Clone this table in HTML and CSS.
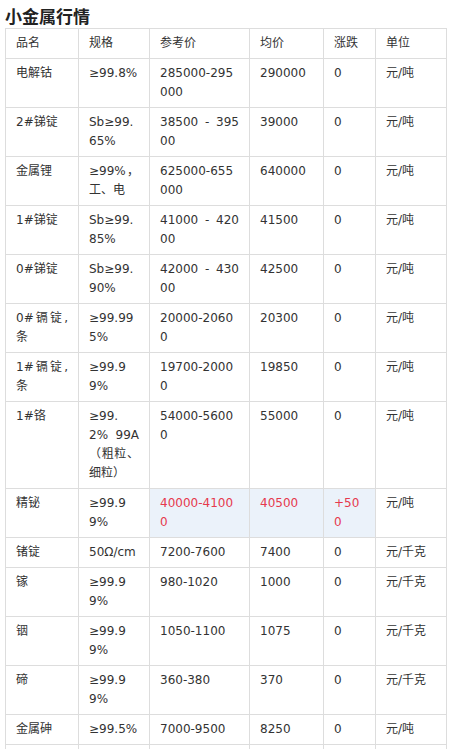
FILE: index.html
```html
<!DOCTYPE html>
<html lang="zh-CN">
<head>
<meta charset="utf-8">
<title>小金属行情</title>
<link rel="stylesheet" href="styles.css">
</head>
<body>
<div class="page">
  <h2 class="title">小金属行情</h2>
  <table class="quotes">
    <colgroup>
      <col class="c-name">
      <col class="c-spec">
      <col class="c-ref">
      <col class="c-avg">
      <col class="c-chg">
      <col class="c-unit">
    </colgroup>
    <thead>
      <tr><th>品名</th><th>规格</th><th>参考价</th><th>均价</th><th>涨跌</th><th>单位</th></tr>
    </thead>
    <tbody>
      <tr><td>电解钴</td><td>≥99.8%</td><td>285000-295000</td><td>290000</td><td>0</td><td>元/吨</td></tr>
      <tr><td>2#锑锭</td><td>Sb≥99.65%</td><td>38500 - 39500</td><td>39000</td><td>0</td><td>元/吨</td></tr>
      <tr><td>金属锂</td><td>≥99%，工、电</td><td>625000-655000</td><td>640000</td><td>0</td><td>元/吨</td></tr>
      <tr><td>1#锑锭</td><td>Sb≥99.85%</td><td>41000 - 42000</td><td>41500</td><td>0</td><td>元/吨</td></tr>
      <tr><td>0#锑锭</td><td>Sb≥99.90%</td><td>42000 - 43000</td><td>42500</td><td>0</td><td>元/吨</td></tr>
      <tr><td>0#镉锭,条</td><td>≥99.995%</td><td>20000-20600</td><td>20300</td><td>0</td><td>元/吨</td></tr>
      <tr><td>1#镉锭,条</td><td>≥99.99%</td><td>19700-20000</td><td>19850</td><td>0</td><td>元/吨</td></tr>
      <tr><td>1#铬</td><td>≥99.<br>2% 99A（粗粒、细粒）</td><td>54000-56000</td><td>55000</td><td>0</td><td>元/吨</td></tr>
      <tr><td>精铋</td><td>≥99.99%</td><td class="up">40000-41000</td><td class="up">40500</td><td class="up">+500</td><td>元/吨</td></tr>
      <tr><td>锗锭</td><td>50Ω/cm</td><td>7200-7600</td><td>7400</td><td>0</td><td>元/千克</td></tr>
      <tr><td>镓</td><td>≥99.99%</td><td>980-1020</td><td>1000</td><td>0</td><td>元/千克</td></tr>
      <tr><td>铟</td><td>≥99.99%</td><td>1050-1100</td><td>1075</td><td>0</td><td>元/千克</td></tr>
      <tr><td>碲</td><td>≥99.99%</td><td>360-380</td><td>370</td><td>0</td><td>元/千克</td></tr>
      <tr><td>金属砷</td><td>≥99.5%</td><td>7000-9500</td><td>8250</td><td>0</td><td>元/吨</td></tr>
      <tr class="empty"><td></td><td></td><td></td><td></td><td></td><td></td></tr>
    </tbody>
  </table>
</div>
</body>
</html>
```
FILE: styles.css
```css
html, body {
  margin: 0;
  padding: 0;
  background: #fff;
}

.page {
  padding: 4px 5px 0;
  font-family: "DejaVu Sans", "Noto Sans CJK SC", sans-serif;
  color: #333;
}

.title {
  margin: 0;
  font-family: "Noto Sans CJK SC", sans-serif;
  font-size: 17px;
  font-weight: bold;
  line-height: 24px;
  color: #222;
}

.quotes {
  border-collapse: collapse;
  table-layout: fixed;
  width: 442px;
  font-size: 12px;
  line-height: 19px;
}

.c-name { width: 73px; }
.c-spec { width: 71px; }
.c-ref  { width: 100px; }
.c-avg  { width: 74px; }
.c-chg  { width: 52px; }
.c-unit { width: 71px; }

.quotes th,
.quotes td {
  border: 1px solid #ddd;
  padding: 5px 10px;
  text-align: justify;
  vertical-align: top;
  word-break: break-all;
  font-weight: normal;
}

.quotes tr.empty td {
  height: 19px;
}

.quotes td.up {
  background: #ebf2fa;
  color: #e6394d;
}
```
